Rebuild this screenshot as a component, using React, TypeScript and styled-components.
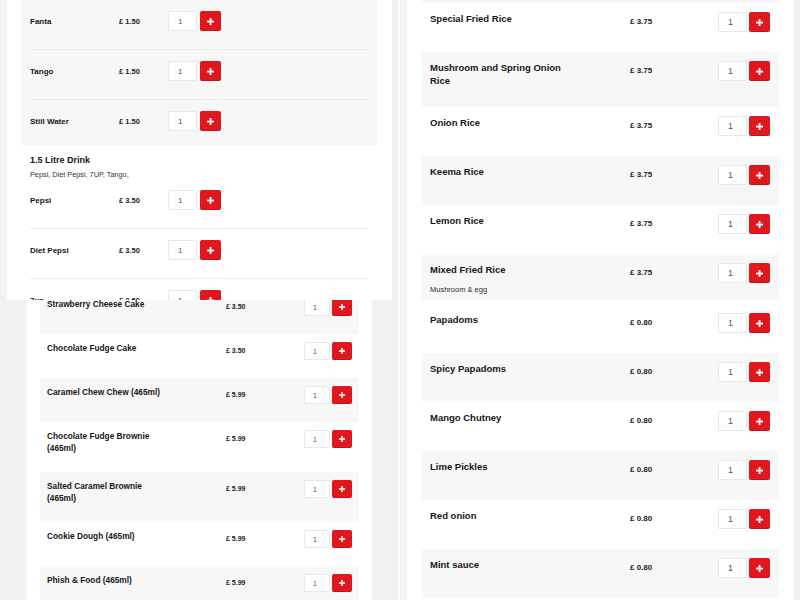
import React from "react";
import styled, { createGlobalStyle } from "styled-components";

const GlobalStyle = createGlobalStyle`
  html, body { margin: 0; padding: 0; background: #ffffff; }
  body { font-family: "Liberation Sans", Arial, sans-serif; color: #1b1b1b; }
  * { box-sizing: border-box; }
`;

type Size = "sm" | "md" | "lg";
const dims: Record<Size, { w: number; h: number; bw: number; font: number; pad: number; icon: number; gap: number }> = {
  sm: { w: 26, h: 18, bw: 20, font: 7, pad: 8, icon: 6, gap: 2 },
  md: { w: 29, h: 20, bw: 21, font: 8, pad: 9, icon: 7, gap: 3 },
  lg: { w: 29, h: 20, bw: 21, font: 9, pad: 9, icon: 7, gap: 2 },
};

const Collage = styled.main`
  display: grid;
  grid-template-columns: 398px 400px;
  grid-template-rows: 300px 300px;
  column-gap: 2px;
  width: 800px;
  height: 600px;
  overflow: hidden;
`;

const Panel = styled.section<{ $padLeft: number }>`
  background: #f2f2f2;
  overflow: hidden;
  padding-left: ${(p) => p.$padLeft}px;
  height: 300px;
`;

const Card = styled.div<{ $width: number; $padL: number; $padR: number }>`
  width: ${(p) => p.$width}px;
  min-height: 100%;
  background: #ffffff;
  padding: 0 ${(p) => p.$padR}px 0 ${(p) => p.$padL}px;
`;

const Controls = styled.div<{ $size: Size }>`
  display: flex;
  align-items: flex-start;
  gap: ${(p) => dims[p.$size].gap}px;
`;

const QtyInput = styled.input<{ $size: Size }>`
  width: ${(p) => dims[p.$size].w}px;
  height: ${(p) => dims[p.$size].h}px;
  margin: 0;
  padding: 0 0 0 ${(p) => dims[p.$size].pad}px;
  border: 1px solid #e8e8e8;
  border-radius: 1px;
  background: #ffffff;
  font-family: "Liberation Sans", Arial, sans-serif;
  font-size: ${(p) => dims[p.$size].font}px;
  color: #555555;
  outline: none;
`;

const AddButton = styled.button<{ $size: Size }>`
  width: ${(p) => dims[p.$size].bw}px;
  height: ${(p) => dims[p.$size].h}px;
  margin: 0;
  padding: 0;
  border: none;
  border-radius: 2px;
  background: #e0171d;
  box-shadow: inset 0 -1px 0 rgba(0, 0, 0, 0.12);
  display: flex;
  align-items: center;
  justify-content: center;
  cursor: pointer;
`;

const PlusIcon = ({ size }: { size: number }) => (
  <svg width={size} height={size} viewBox="0 0 8 8" aria-hidden="true">
    <rect x="3" y="0" width="2.1" height="8" fill="#ffffff" />
    <rect x="0" y="3" width="8" height="2.1" fill="#ffffff" />
  </svg>
);

const QtyControl = ({ size }: { size: Size }) => (
  <Controls $size={size}>
    <QtyInput $size={size} defaultValue="1" aria-label="Quantity" />
    <AddButton $size={size} aria-label="Add">
      <PlusIcon size={dims[size].icon} />
    </AddButton>
  </Controls>
);

/* ---------- Top-left: drinks ---------- */

const DrinkGroup = styled.div<{ $shaded: boolean }>`
  background: ${(p) => (p.$shaded ? "#f7f7f7" : "#ffffff")};
  padding: 0 9px;
`;

const GroupHead = styled.div`
  padding-top: 9px;
`;

const GroupTitle = styled.h3`
  margin: 0;
  font-size: 9px;
  line-height: 12px;
  font-weight: 700;
  color: #151515;
`;

const GroupDesc = styled.p`
  margin: 4px 0 0;
  font-size: 7.3px;
  line-height: 10px;
  color: #333333;
`;

const DrinkRow = styled.div`
  display: flex;
  align-items: center;
  padding: 11px 0 18px;
  border-bottom: 1px solid #ebebeb;
  &:last-child {
    border-bottom: none;
    padding-bottom: 14px;
  }
  ${GroupHead} + & {
    padding-top: 10px;
  }
`;

const DrinkName = styled.span`
  width: 89px;
  font-size: 8px;
  font-weight: 700;
  color: #161616;
`;

const DrinkPrice = styled.span`
  width: 49px;
  font-size: 7.5px;
  font-weight: 700;
  color: #222222;
`;

/* ---------- Bottom-left: desserts ---------- */

const DessertList = styled.div`
  margin-top: -10px;
`;

const DessertRow = styled.div<{ $shaded: boolean }>`
  display: grid;
  grid-template-columns: 179px 78px 1fr;
  align-items: start;
  padding: 8px 7px 18px;
  background: ${(p) => (p.$shaded ? "#f7f7f7" : "#ffffff")};
`;

const DessertName = styled.span`
  max-width: 120px;
  font-size: 8.3px;
  line-height: 12px;
  font-weight: 700;
  color: #161616;
`;

const DessertPrice = styled.span`
  font-size: 7px;
  line-height: 17px;
  font-weight: 700;
  color: #222222;
`;

const EndCell = styled.div`
  justify-self: end;
`;

/* ---------- Right: rice & sides ---------- */

const SideList = styled.div<{ $offset: number }>`
  padding-top: ${(p) => p.$offset}px;
`;

const RowEdge = styled.div<{ $shaded: boolean }>`
  height: 3px;
  background: ${(p) => (p.$shaded ? "#f7f7f7" : "#ffffff")};
`;

const SideRow = styled.div<{ $shaded: boolean }>`
  display: grid;
  grid-template-columns: 200px 88px 1fr;
  align-items: start;
  padding: 9px 9px 20px 8px;
  background: ${(p) => (p.$shaded ? "#f7f7f7" : "#ffffff")};
`;

const SideText = styled.div`
  display: flex;
  flex-direction: column;
`;

const SideName = styled.span`
  max-width: 145px;
  font-size: 9.5px;
  line-height: 13px;
  font-weight: 700;
  color: #161616;
`;

const SideDesc = styled.span`
  margin-top: 9px;
  font-size: 7.5px;
  line-height: 10px;
  color: #2a2a2a;
`;

const SidePrice = styled.span`
  font-size: 8px;
  line-height: 20px;
  font-weight: 700;
  color: #222222;
`;

type Item = { name: string; price: string; desc?: string };

const cans: Item[] = [
  { name: "Fanta", price: "£ 1.50" },
  { name: "Tango", price: "£ 1.50" },
  { name: "Still Water", price: "£ 1.50" },
];

const bottles: Item[] = [
  { name: "Pepsi", price: "£ 3.50" },
  { name: "Diet Pepsi", price: "£ 3.50" },
  { name: "7up", price: "£ 3.50" },
];

const desserts: Item[] = [
  { name: "Strawberry Cheese Cake", price: "£ 3.50" },
  { name: "Chocolate Fudge Cake", price: "£ 3.50" },
  { name: "Caramel Chew Chew (465ml)", price: "£ 5.99" },
  { name: "Chocolate Fudge Brownie (465ml)", price: "£ 5.99" },
  { name: "Salted Caramel Brownie (465ml)", price: "£ 5.99" },
  { name: "Cookie Dough (465ml)", price: "£ 5.99" },
  { name: "Phish & Food (465ml)", price: "£ 5.99" },
];

const rice: Item[] = [
  { name: "Special Fried Rice", price: "£ 3.75" },
  { name: "Mushroom and Spring Onion Rice", price: "£ 3.75" },
  { name: "Onion Rice", price: "£ 3.75" },
  { name: "Keema Rice", price: "£ 3.75" },
  { name: "Lemon Rice", price: "£ 3.75" },
  { name: "Mixed Fried Rice", price: "£ 3.75", desc: "Mushroom & egg" },
];

const sides: Item[] = [
  { name: "Papadoms", price: "£ 0.80" },
  { name: "Spicy Papadoms", price: "£ 0.80" },
  { name: "Mango Chutney", price: "£ 0.80" },
  { name: "Lime Pickles", price: "£ 0.80" },
  { name: "Red onion", price: "£ 0.80" },
  { name: "Mint sauce", price: "£ 0.80" },
];

const SideRows = ({ items, shadeFirst }: { items: Item[]; shadeFirst: boolean }) => (
  <>
    {items.map((it, i) => (
      <SideRow key={it.name} $shaded={(i % 2 === 0) === shadeFirst}>
        <SideText>
          <SideName>{it.name}</SideName>
          {it.desc && <SideDesc>{it.desc}</SideDesc>}
        </SideText>
        <SidePrice>{it.price}</SidePrice>
        <EndCell>
          <QtyControl size="lg" />
        </EndCell>
      </SideRow>
    ))}
  </>
);

export default function App() {
  return (
    <>
      <GlobalStyle />
      <Collage>
        <Panel $padLeft={7} style={{ gridColumn: 1, gridRow: 1 }}>
          <Card $width={385} $padL={14} $padR={15}>
            <DrinkGroup $shaded>
              {cans.map((it) => (
                <DrinkRow key={it.name}>
                  <DrinkName>{it.name}</DrinkName>
                  <DrinkPrice>{it.price}</DrinkPrice>
                  <QtyControl size="md" />
                </DrinkRow>
              ))}
            </DrinkGroup>
            <DrinkGroup $shaded={false}>
              <GroupHead>
                <GroupTitle>1.5 Litre Drink</GroupTitle>
                <GroupDesc>Pepsi, Diet Pepsi, 7UP, Tango,</GroupDesc>
              </GroupHead>
              {bottles.map((it) => (
                <DrinkRow key={it.name}>
                  <DrinkName>{it.name}</DrinkName>
                  <DrinkPrice>{it.price}</DrinkPrice>
                  <QtyControl size="md" />
                </DrinkRow>
              ))}
            </DrinkGroup>
          </Card>
        </Panel>

        <Panel $padLeft={27} style={{ gridColumn: 1, gridRow: 2 }}>
          <Card $width={345} $padL={13} $padR={13}>
            <DessertList>
              {desserts.map((it, i) => (
                <DessertRow key={it.name} $shaded={i % 2 === 0}>
                  <DessertName>{it.name}</DessertName>
                  <DessertPrice>{it.price}</DessertPrice>
                  <EndCell>
                    <QtyControl size="sm" />
                  </EndCell>
                </DessertRow>
              ))}
            </DessertList>
          </Card>
        </Panel>

        <Panel $padLeft={7} style={{ gridColumn: 2, gridRow: 1 }}>
          <Card $width={387} $padL={15} $padR={15}>
            <SideList $offset={0}>
              <RowEdge $shaded />
              <SideRows items={rice} shadeFirst={false} />
            </SideList>
          </Card>
        </Panel>

        <Panel $padLeft={7} style={{ gridColumn: 2, gridRow: 2 }}>
          <Card $width={387} $padL={15} $padR={15}>
            <SideList $offset={4}>
              <SideRows items={sides} shadeFirst={false} />
            </SideList>
          </Card>
        </Panel>
      </Collage>
    </>
  );
}
